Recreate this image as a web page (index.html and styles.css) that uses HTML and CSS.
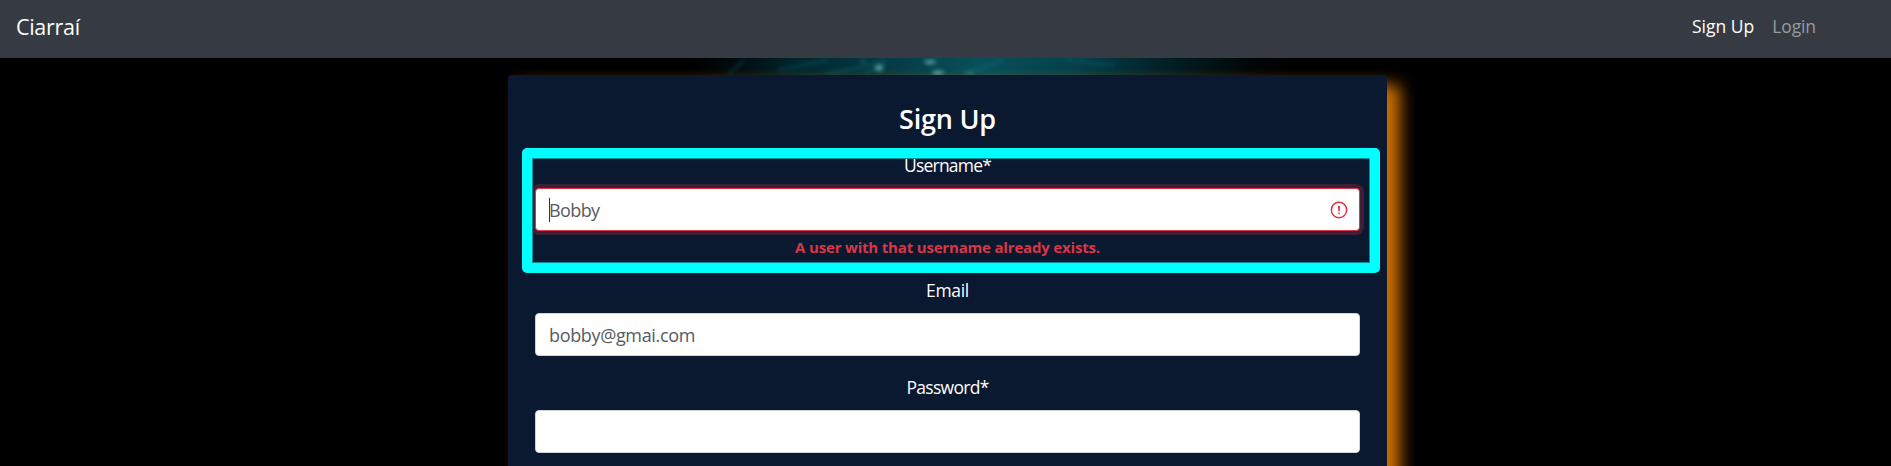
FILE: index.html
```html
<!DOCTYPE html>
<html lang="en">
<head>
<meta charset="utf-8">
<title>Sign Up</title>
<link rel="stylesheet" href="styles.css">
</head>
<body>
<nav class="navbar">
  <a class="brand">Ciarraí</a>
  <div class="links"><a class="link active">Sign Up</a><a class="link login">Login</a></div>
</nav>
<main class="page">
  <svg class="backdrop" width="640" height="100" viewBox="0 0 640 100" aria-hidden="true">
    <defs>
      <linearGradient id="sea" x1="0" x2="1">
        <stop offset="0.05" stop-color="#000"/><stop offset="0.12" stop-color="#000c10"/>
        <stop offset="0.22" stop-color="#00272e"/><stop offset="0.36" stop-color="#053b45"/>
        <stop offset="0.5" stop-color="#07505b"/><stop offset="0.65" stop-color="#04404a"/>
        <stop offset="0.78" stop-color="#012228"/><stop offset="0.92" stop-color="#000708"/>
        <stop offset="1" stop-color="#000"/>
      </linearGradient>
      <filter id="soft" x="-50%" y="-100%" width="200%" height="300%"><feGaussianBlur stdDeviation="2"/></filter>
    </defs>
    <rect width="640" height="100" fill="url(#sea)"/>
    <g filter="url(#soft)" fill="none" stroke="#167783" stroke-width="3" opacity=".3">
      <path d="M68 17 84 2M118 12l50-10M165 16q35-5 60-14M205 16l22-12M405 0q25 6 50 7M310 14l34-12"/>
    </g>
    <g filter="url(#soft)" fill="#74c5bd" opacity=".75">
      <ellipse cx="219" cy="10" rx="4" ry="3"/><ellipse cx="270" cy="4" rx="6" ry="2"/>
      <ellipse cx="278" cy="15" rx="6" ry="2.5"/><ellipse cx="309" cy="15" rx="6" ry="1.5" opacity=".5"/>
      <ellipse cx="203" cy="3" rx="3" ry="1.5" opacity=".4"/>
    </g>
  </svg>
  <form class="card">
    <h1 class="title">Sign Up</h1>
    <div class="group">
      <label class="label username">Username*</label>
      <div class="control invalid">
        <span class="caret"></span><span class="value">Bobby</span>
        <svg class="alert" width="18" height="18" viewBox="0 0 12 12" fill="none" stroke="#dc3545"><circle cx="6" cy="6" r="5.1" stroke-width="1"/><path d="M5.8 3.6h.4L6 6.5z" stroke-linejoin="round"/><circle cx="6" cy="8.2" r=".6" fill="#dc3545" stroke="none"/></svg>
      </div>
      <p class="error">A user with that username already exists.</p>
    </div>
    <div class="group">
      <label class="label email">Email</label>
      <div class="control"><span class="value">bobby@gmai.com</span></div>
    </div>
    <div class="group">
      <label class="label password">Password*</label>
      <div class="control"></div>
    </div>
    <div class="highlight"></div>
  </form>
</main>
</body>
</html>
```
FILE: styles.css
```css
* { box-sizing: border-box; }
body { margin: 0; height: 466px; overflow: hidden; background: #000; color: #fff; font: 18px/27px "Segoe UI", "Open Sans", "Noto Sans", sans-serif; }
.navbar { height: 58px; padding: 0 75px 0 16px; background: #363a42; display: flex; align-items: center; justify-content: space-between; }
.brand { font-size: 21.5px; letter-spacing: -0.3px; padding-bottom: 5px; }
.links { display: flex; gap: 18px; padding-bottom: 5px; }
.link { font-size: 17.5px; letter-spacing: 0; }
.login { color: #999b9e; letter-spacing: -0.1px; }
.page { position: relative; padding-top: 17px; height: 408px; overflow: hidden; }
.backdrop { position: absolute; left: 660px; top: 0; }
.card { position: relative; width: 879px; height: 420px; margin: 0 0 0 508px; padding: 27px 27px 0; border-radius: 4px; background: #0a1830; box-shadow: 13px 10px 16px #cf7000, 0 0 9px rgba(255, 140, 0, .06); }
.title { height: 32px; margin: 0 0 18px; padding-top: 1px; font-size: 27px; line-height: 32px; font-weight: 600; text-align: center; letter-spacing: -0.2px; }
.group { margin-bottom: 18px; }
.label { display: block; height: 27px; margin-bottom: 9px; text-align: center; font-size: 17.5px; }
.username { letter-spacing: -0.8px; }
.email { letter-spacing: -0.3px; }
.password { letter-spacing: -0.7px; }
.control { display: flex; align-items: center; height: 43px; padding: 0 11px 0 13px; border: 1px solid #ced4da; border-radius: 4px; background: #fff; color: #555b62; letter-spacing: -0.35px; }
.value { padding-top: 2px; }
.invalid { border-color: #dc3545; box-shadow: 0 0 0 4px rgba(220, 53, 69, .25); letter-spacing: -0.6px; }
.caret { width: 1px; height: 24px; margin-right: -1px; background: #333; }
.alert { margin-left: auto; }
.error { height: 23px; margin: 5px 0 18px; line-height: 23px; text-align: center; font-size: 15px; font-weight: 700; letter-spacing: -0.18px; color: #dc3545; }
.highlight { position: absolute; left: 14px; top: 73px; width: 858px; height: 125px; border: 10px solid #0ff; border-radius: 5px; box-shadow: inset 0 0 0 1px #0a8b98; }
```
